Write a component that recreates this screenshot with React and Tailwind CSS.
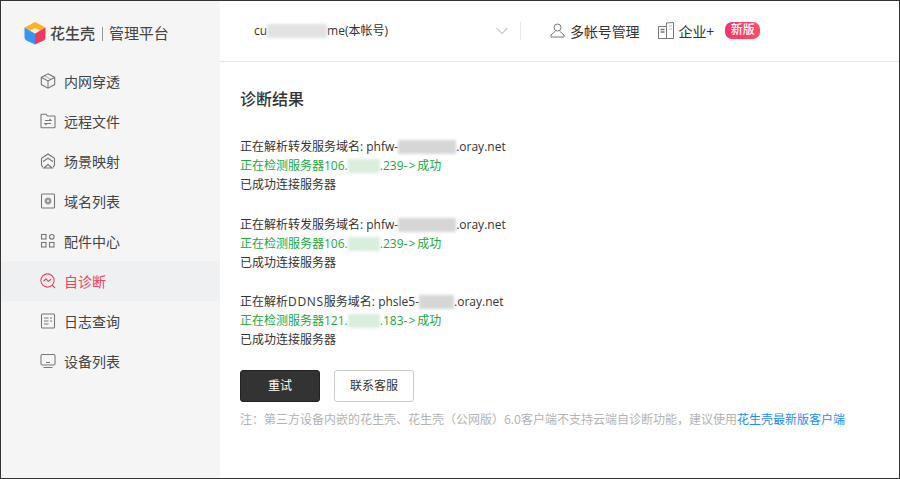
const Icon = ({ children, className = "text-[#777]" }) => (
  <svg width="16" height="16" viewBox="0 0 16 16" fill="none" stroke="currentColor" strokeWidth="1.1" className={`shrink-0 ${className}`}>
    {children}
  </svg>
);

const items = [
  ["内网穿透", <Icon><path d="M8 .8 14.7 4.4V11.6L8 15.2 1.3 11.6V4.4Z" /><path d="M1.5 4.5 8 8l6.5-3.5M8 8v7" /><path d="M4.5 2.8 11 6.4" strokeOpacity=".5" /></Icon>],
  ["远程文件", <Icon><path d="M1 3.5V14a.8.8 0 0 0 .8.8h12.4a.8.8 0 0 0 .8-.8V3.8a.8.8 0 0 0-.8-.8H7.5L6 1.2H1.8A.8.8 0 0 0 1 2Z" /><path d="M5 7.5h6L9.5 6M11 10.5H5L6.5 12" /></Icon>],
  ["场景映射", <Icon><path d="M3 14.5 1.5 12V5.2L8 1l6.500 4.200V12L13 14.500" /><path d="M3 8.500 8 5.200l5 3.300" /><path d="M4 15 8 11.500 12 15Z" /></Icon>],
  ["域名列表", <Icon><rect x="1.500" y="1" width="13" height="14" rx="1" /><circle cx="8" cy="8" r="2.200" strokeWidth="2.400" strokeOpacity=".75" /></Icon>],
  ["配件中心", <Icon><rect x="1.500" y="1.500" width="4.500" height="4.500" /><rect x="1.500" y="9.500" width="4.500" height="4.500" /><rect x="9.500" y="9.500" width="4.500" height="4.500" /><circle cx="11.800" cy="3.800" r="2.300" /></Icon>],
  ["自诊断", <Icon className="text-[#f5425f]"><circle cx="7.500" cy="7.500" r="6.600" /><path d="M3.500 8.200 6 5.800l2.400 2.600 2.800-2.400" /><path d="m12 12 3 3" /></Icon>, true],
  ["日志查询", <Icon><rect x="1.500" y="1" width="13" height="14" rx="1" /><path d="M4 5h4.500M10 5h2M4 8h4.500M10 8h2M4 11h4.500" /></Icon>],
  ["设备列表", <Icon><rect x="1" y="1.500" width="14" height="10.500" rx="1.500" /><path d="M6 9.500h4M3.500 14.500h9" /></Icon>],
];

const Blur = ({ w, tone = "bg-[#d6d6d6]" }) => (
  <span className={`inline-block h-[14px] align-[-3px] blur-[1.5px] ${tone}`} style={{ width: w }} />
);

const Arrow = () => <span className="tracking-[1.5px]">-&gt;</span>;

const Group = ({ lines }) => (
  <div className="text-[12px] leading-[19px] text-[#333]">
    <div>{lines[0]}</div>
    <div className="text-[#22a83c]">{lines[1]}</div>
    <div>已成功连接服务器</div>
  </div>
);

export default function App() {
  return (
    <div
      className="flex h-[479px] w-[900px] overflow-hidden border border-[#333] bg-white text-[#333]"
      style={{ fontFamily: '"Open Sans","Noto Sans CJK SC",sans-serif' }}
    >
      <aside className="flex w-[219px] shrink-0 flex-col bg-[#f5f5f5]">
        <div className="flex h-[60px] items-center pl-[23px] pt-[5px]">
          <svg width="22" height="23" viewBox="0 0 22 23" className="shrink-0">
            <path d="M11 0 21.500 5.600 11 11.500.5 5.600Z" fill="#fbb32a" />
            <path d="M.5 5.600 11 11.500V22.500L2.500 18.500Q.5 17.500.5 15.500Z" fill="#3b92f5" />
            <path d="M21.500 5.600 11 11.500V22.500L19.500 18.500Q21.500 17.500 21.500 15.500Z" fill="#ee3a63" />
            <path d="M11 11.500 16 8.600 11 6 6 8.600Z" fill="#fff2c2" />
          </svg>
          <span className="ml-[4px] text-[15px] font-medium text-[#444]">花生壳</span>
          <span className="mx-[6.500px] h-[14px] w-px bg-[#999]" />
          <span className="text-[15px] tracking-[-0.1px] text-[#444]">管理平台</span>
        </div>
        <nav className="flex flex-col">
          {items.map(([label, icon, active]) => (
            <div key={label} className={`flex h-[40px] items-center pl-[39px] ${active ? "bg-[#eff0f2]" : ""}`}>
              {icon}
              <span className={`ml-[8px] text-[14px] ${active ? "text-[#f5425f]" : "text-[#444]"}`}>{label}</span>
            </div>
          ))}
        </nav>
      </aside>

      <main className="flex min-w-0 flex-1 flex-col">
        <header className="flex h-[61px] shrink-0 items-center border-b border-[#e5e5e5]">
          <div className="flex w-[301px] items-center justify-between border-r border-[#e8e8e8] pl-[34px] pr-[12px]">
            <span className="flex items-center text-[12px]">
              cu<Blur w={60} tone="bg-[#e2e2e2]" />me(本帐号)
            </span>
            <svg width="12" height="8" viewBox="0 0 12 8" fill="none" stroke="#c8ccd2" strokeWidth="1.2"><path d="m.6 1 5.400 5.600L11.400 1" /></svg>
          </div>
          <div className="ml-[29px] flex items-center">
            <svg width="15" height="15" viewBox="0 0 15 15" fill="none" stroke="#777" className="-mt-[2px]"><circle cx="7.500" cy="4.500" r="3.500" /><path d="M5.500 8 1 12v2h13v-2L9.500 8" /></svg>
            <span className="ml-[5px] text-[14px] tracking-[-0.1px]">多帐号管理</span>
            <svg width="16" height="17" viewBox="0 0 16 17" fill="none" stroke="#777" className="-mt-[2px] ml-[18px]"><path d="M.5 4.500h8v12h-8ZM8.500 4V1L15.500.5v16h-7" /><path d="M2.500 7.500h4M2.500 10h4" strokeWidth="1.500" /><path d="M11 4h3M11 7h3" strokeOpacity=".5" /></svg>
            <span className="ml-[5px] text-[14px] tracking-[-0.1px]">企业+</span>
            <span className="-mt-[2px] ml-[11px] flex h-[17px] w-[35px] items-center justify-center rounded-[7px] bg-gradient-to-r from-[#f8326f] to-[#fb4f68] text-[12px] font-medium leading-none text-white">新版</span>
          </div>
        </header>

        <section className="flex flex-col px-[20px] pt-[25px]">
          <h1 className="text-[16px] font-medium leading-[24px] text-[#333]">诊断结果</h1>
          <div className="mt-[26px] flex flex-col gap-[20.500px]">
            <Group lines={[<>正在解析转发服务域名: phfw-<Blur w={58} />.oray.net</>, <>正在检测服务器106.<Blur w={32} tone="bg-[#d9eedc]" />.239<Arrow />成功</>]} />
            <Group lines={[<>正在解析转发服务域名: phfw-<Blur w={58} />.oray.net</>, <>正在检测服务器106.<Blur w={32} tone="bg-[#d9eedc]" />.239<Arrow />成功</>]} />
            <Group lines={[<>正在解析<span className="tracking-[0.7px]">DDNS</span>服务域名: phsle5-<Blur w={35} />.oray.net</>, <>正在检测服务器121.<Blur w={32} tone="bg-[#d9eedc]" />.183<Arrow />成功</>]} />
          </div>
          <div className="mt-[21px] flex gap-[14px]">
            <button className="h-[32px] w-[80px] rounded-[3px] border border-[#222] bg-[#333] text-[12px] text-white">重试</button>
            <button className="h-[32px] w-[80px] rounded-[3px] border border-[#ccc] bg-white text-[12px] text-[#333]">联系客服</button>
          </div>
          <p className="mt-[8px] whitespace-nowrap text-[12px] leading-[20px] text-[#b3b3b3]">
            注：第三方设备内嵌的花生壳、花生壳（公网版）6.0客户端不支持云端自诊断功能，建议使用<span className="text-[#1f8bf5]">花生壳最新版客户端</span>
          </p>
        </section>
      </main>
    </div>
  );
}
